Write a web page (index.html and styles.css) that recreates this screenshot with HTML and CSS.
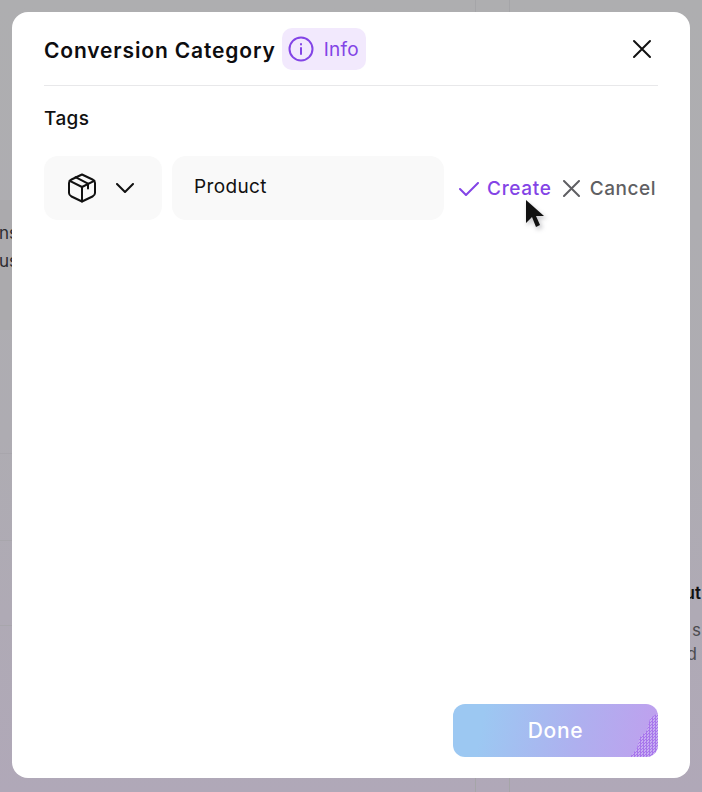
FILE: index.html
```html
<!DOCTYPE html>
<html lang="en">
<head>
    <meta charset="UTF-8">
    <meta name="viewport" content="width=device-width, initial-scale=1.0">
    <title>Conversion Category</title>
    <link rel="stylesheet" href="styles.css">
</head>
<body>
    <div class="page">
        <div class="page-left">
            <span>ns</span>
            <span>us</span>
        </div>
        <div class="page-right">
            <strong>ut</strong>
            <span>s</span>
            <span class="page-right-d">d</span>
        </div>
    </div>

    <div class="overlay">
        <div class="modal">
            <div class="modal-header">
                <h2>Conversion Category</h2>
                <div class="info-chip">
                    <svg width="26" height="26" viewBox="0 0 26 26" fill="none" stroke="#8344e6" stroke-width="2">
                        <circle cx="13" cy="13" r="11.5"/>
                        <path d="M13 12v6" stroke-linecap="round"/>
                        <path d="M13 8v.4" stroke-linecap="round"/>
                    </svg>
                    <span>Info</span>
                </div>
                <button class="close-btn" aria-label="Close">
                    <svg width="20" height="20" viewBox="0 0 20 20" fill="none" stroke="#111" stroke-width="2" stroke-linecap="round">
                        <path d="M2 2l16 16M18 2L2 18"/>
                    </svg>
                </button>
            </div>

            <div class="field-label">Tags</div>

            <div class="tag-row">
                <div class="icon-select">
                    <svg width="30" height="30" viewBox="0 0 30 30" fill="none" stroke="#111" stroke-width="2" stroke-linejoin="round" stroke-linecap="round">
                        <path d="M15 1.500l10.500 5c1.600.8 2.500 1.900 2.500 3.400v10.200c0 1.500-.9 2.600-2.500 3.400L15 28.500 4.500 23.500C2.900 22.700 2 21.600 2 20.100V9.900c0-1.500.9-2.600 2.500-3.400z"/>
                        <path d="M2.800 7.800L15 14l12.200-6.200M15 14v14.500"/>
                        <path d="M8.500 4.200l12.500 6.400v5"/>
                    </svg>
                    <svg width="18" height="10" viewBox="0 0 18 10" fill="none" stroke="#111" stroke-width="2" stroke-linecap="round" stroke-linejoin="round">
                        <path d="M1 1l8 8 8-8"/>
                    </svg>
                </div>
                <div class="tag-input">Product</div>
                <div class="tag-actions">
                    <button class="action create">
                        <svg width="20" height="14" viewBox="0 0 20 14" fill="none" stroke="#8344e6" stroke-width="2" stroke-linecap="round" stroke-linejoin="round">
                            <path d="M1 7l6 6L19 1"/>
                        </svg>
                        Create
                    </button>
                    <button class="action cancel">
                        <svg width="17" height="17" viewBox="0 0 17 17" fill="none" stroke="#5f5f63" stroke-width="2" stroke-linecap="round">
                            <path d="M1 1l15 15M16 1L1 16"/>
                        </svg>
                        Cancel
                    </button>
                </div>
            </div>

            <div class="modal-footer">
                <button class="done-btn"><span class="done-dither"></span><span class="done-label">Done</span></button>
            </div>
        </div>

        <svg class="cursor" width="30" height="38" viewBox="0 0 30 38">
            <path class="cursor-shadow" d="M5 5v24l6-5 4 9 6-2-4-9h8z"/>
            <path d="M4 3v23l6-6 4 10 4-2-4-9h8z" fill="#111"/>
        </svg>
    </div>
</body>
</html>
```

FILE: styles.css
```css
* {
    box-sizing: border-box;
}

html, body {
    height: 100%;
}

body {
    margin: 0;
    font-family: Inter, "Noto Sans", sans-serif;
    overflow: hidden;
}

.page {
    height: 100%;
    display: flex;
    justify-content: space-between;
    color: #2c2c30;
    font-size: 17px;
    background-color: #aeaeb0;
    background-image:
        linear-gradient(90deg, transparent 475px, #a5a5a8 475px, #a5a5a8 476px, transparent 476px),
        linear-gradient(90deg, transparent 509px, #a5a5a8 509px, #a5a5a8 510px, transparent 510px),
        linear-gradient(180deg, #abaaad 0, #abaaad 100%),
        linear-gradient(180deg, #a8a6ac 0, #a8a6ac 1px, transparent 1px, transparent 87px, #a8a6ac 87px, #a8a6ac 88px, transparent 88px, transparent 172px, #a8a6ac 172px, #a8a6ac 173px, transparent 173px),
        linear-gradient(180deg, #aeaeb0 0%, #aeacb2 55%, #b0a8b8 100%);
    background-size: 100% 100%, 100% 100%, 12px 130px, 12px 180px, 100% 100%;
    background-position: 0 0, 0 0, 0 200px, 0 453px, 0 0;
    background-repeat: no-repeat;
}

.page-left {
    width: 18px;
    padding-top: 221px;
    display: flex;
    flex-direction: column;
    align-items: flex-end;
    gap: 4px;
    line-height: 24px;
}

.page-right {
    width: 14px;
    padding: 581px 1px 0 0;
    display: flex;
    flex-direction: column;
    align-items: flex-end;
    line-height: 24px;
    color: #4c4c50;
}

.page-right strong {
    color: #111;
    font-weight: 600;
    margin-bottom: 13px;
}

.page-right-d {
    margin-right: 4px;
}

.overlay {
    position: absolute;
    top: 0;
    left: 0;
    right: 0;
    bottom: 0;
    padding: 12px 12px 14px;
}

.modal {
    height: 100%;
    background: #fff;
    border-radius: 16px;
    padding: 16px 32px 21px;
    display: flex;
    flex-direction: column;
}

.modal-header {
    display: flex;
    align-items: center;
    gap: 6px;
    padding-bottom: 15px;
    border-bottom: 1px solid #e8e8ea;
}

.modal-header h2 {
    margin: 2px 0 0;
    font-size: 21px;
    font-weight: 600;
    letter-spacing: 0.85px;
    color: #0d0d0f;
}

.info-chip {
    display: flex;
    align-items: center;
    gap: 10px;
    height: 42px;
    padding: 0 7px 0 6px;
    background: #f2e9fd;
    border-radius: 10px;
    color: #8344e6;
    font-size: 19px;
    letter-spacing: 0.3px;
}

.close-btn {
    margin-left: auto;
    margin-right: 6px;
    padding: 0;
    border: none;
    background: none;
    display: flex;
}

.field-label {
    margin-top: 21px;
    font-size: 19px;
    font-weight: 450;
    letter-spacing: 0.4px;
    line-height: 24px;
    color: #111;
}

.tag-row {
    margin-top: 25px;
    display: flex;
    align-items: center;
    gap: 10px;
}

.icon-select {
    width: 118px;
    height: 64px;
    background: #f9f9f9;
    border-radius: 14px;
    display: flex;
    align-items: center;
    gap: 19px;
    padding-left: 23px;
}

.tag-input {
    width: 272px;
    height: 64px;
    background: #f9f9f9;
    border-radius: 14px;
    padding: 19px 22px 0;
    font-size: 19px;
    letter-spacing: 0.35px;
    line-height: 24px;
    color: #111;
}

.tag-actions {
    display: flex;
    align-items: center;
    gap: 11px;
    margin-left: 5px;
    padding-top: 1px;
}

.action {
    display: flex;
    align-items: center;
    gap: 8px;
    padding: 0;
    border: none;
    background: none;
    font-family: inherit;
    font-size: 19px;
    font-weight: 450;
    letter-spacing: 0.7px;
    white-space: nowrap;
}

.create {
    color: #8344e6;
}

.cancel {
    color: #5f5f63;
    gap: 10px;
    letter-spacing: 0.55px;
}

.modal-footer {
    margin-top: auto;
    display: flex;
    justify-content: flex-end;
}

.done-btn {
    position: relative;
    width: 205px;
    height: 53px;
    border: none;
    border-radius: 12px;
    overflow: hidden;
    background: linear-gradient(100deg, #9cc8f2 15%, #aeb0ef 60%, #c09fee 100%);
    color: #fff;
    font-family: inherit;
    font-size: 21px;
    font-weight: 450;
    letter-spacing: 0.7px;
}

.done-dither {
    position: absolute;
    right: 0;
    bottom: 0;
    width: 28px;
    height: 44px;
    background: repeating-conic-gradient(#a877ec 0 25%, #c7adf2 0 50%) 0 0 / 3px 3px;
    clip-path: polygon(100% 0, 72% 12%, 60% 40%, 35% 55%, 25% 80%, 0 100%, 100% 100%);
}

.done-label {
    position: relative;
}

.cursor {
    position: absolute;
    left: 522px;
    top: 197px;
}

.cursor-shadow {
    fill: rgba(60, 60, 70, 0.25);
    filter: blur(2px);
}
```
